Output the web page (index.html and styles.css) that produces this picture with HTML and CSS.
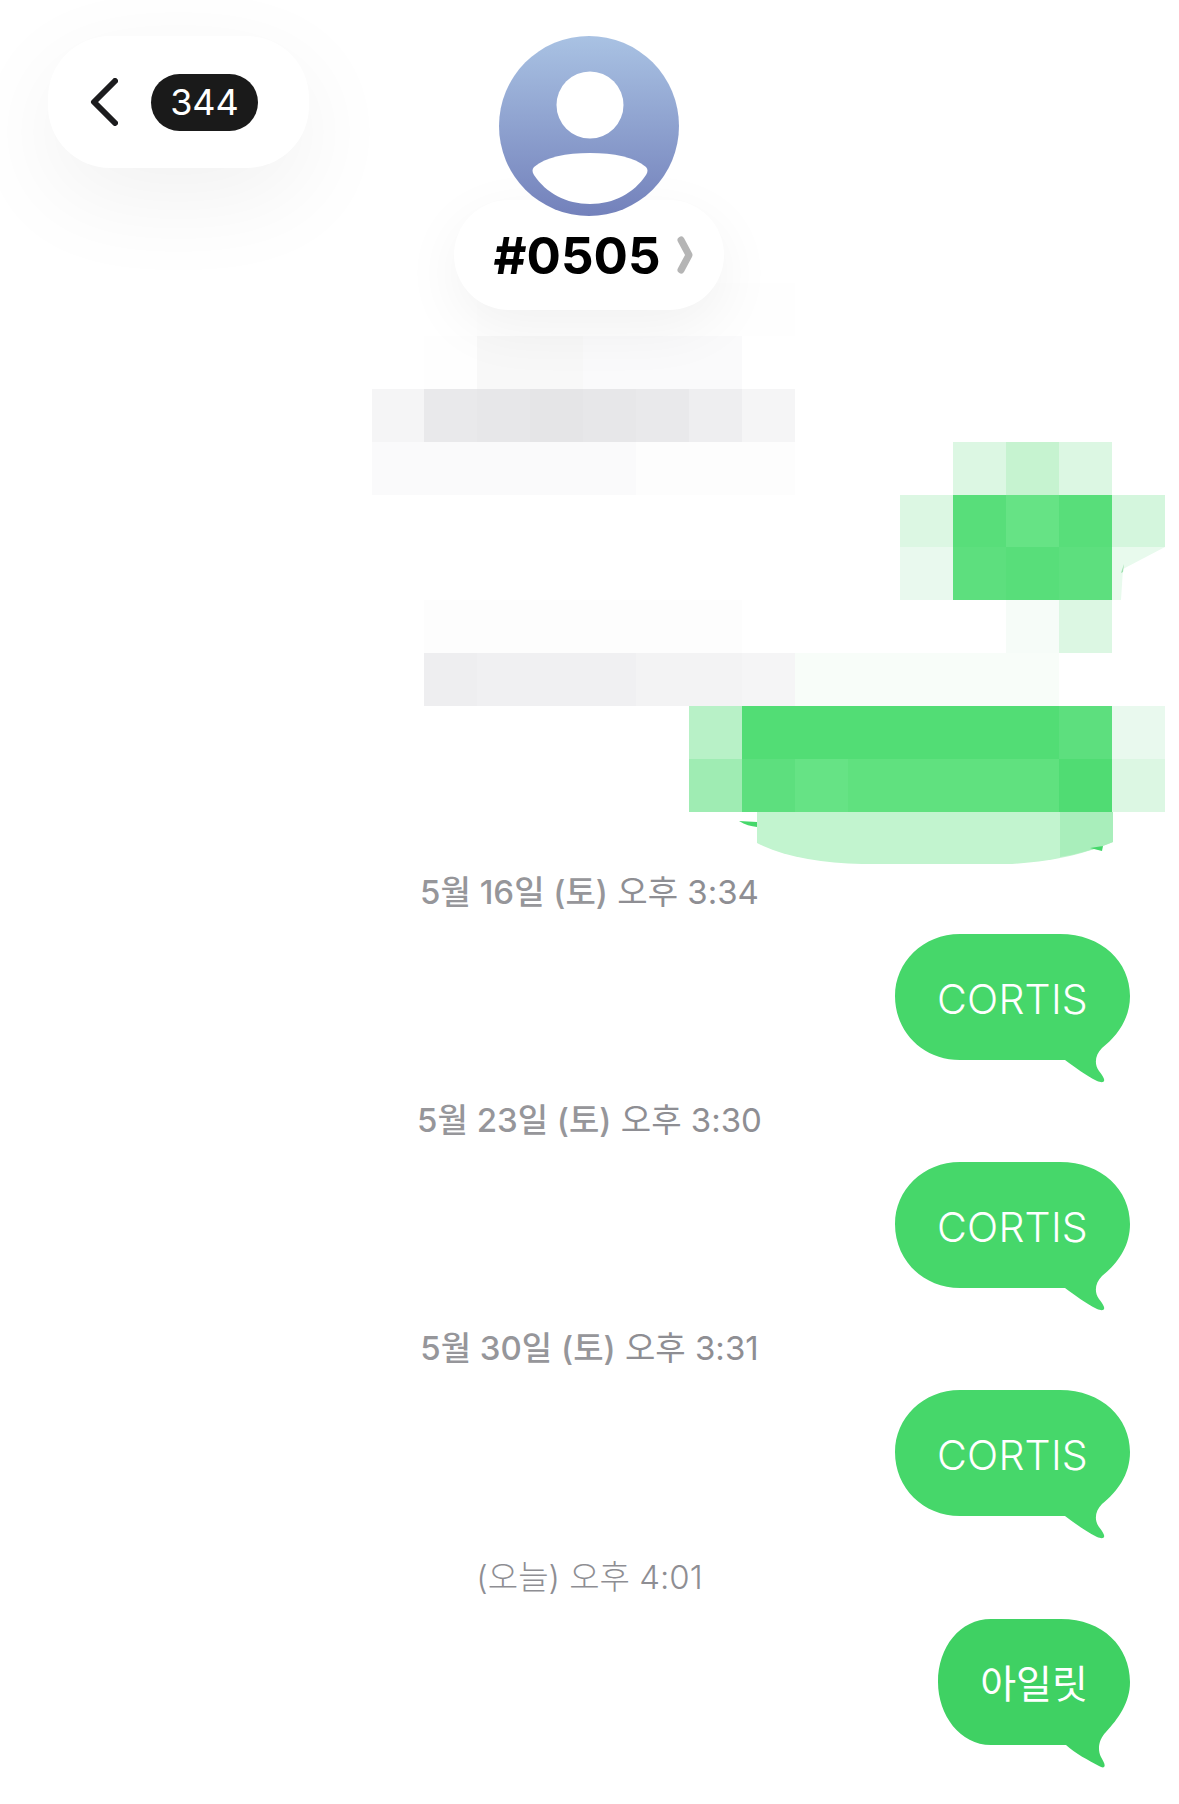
FILE: index.html
```html
<!DOCTYPE html>
<html>
    <head>
        <title>#0505</title>
        <link rel="stylesheet" href="styles.css">
    </head>
    <body>
        <div class="head">
            <div class="back_box">
                <svg class="back_icon" width="28" height="48" viewBox="0 0 28 48"><path d="M25 3 L4 24 L25 45" /></svg>
                <span class="back_num">344</span>
            </div>
            <div class="who">
                <div class="avatar">
                    <svg width="180" height="180" viewBox="0 0 180 180"><circle cx="91" cy="69" r="33.5" fill="#fff"/><path d="M35 131 C47 121 67 117 91 117 C115 117 135 121 147 131 C149 133 149 136 147 139 C135 157 115 168 91 168 C67 168 47 157 35 139 C33 136 33 133 35 131 Z" fill="#fff"/></svg>
                </div>
                <div class="who_name">#0505<svg class="who_arrow" width="16" height="38" viewBox="0 0 16 38"><path d="M4 4 L12 19 L4 34" /></svg></div>
            </div>
        </div>

        <!-- 打码的部分 -->
        <div class="mosaic">
            <i></i><i></i><i class="k0"></i><i class="k0"></i><i class="k0"></i><i class="k0"></i><i class="k0"></i><i class="k0"></i><i></i><i></i><i></i><i></i><i></i><i></i><i></i>
            <i></i><i class="k0"></i><i class="k4"></i><i class="k4"></i><i class="k3"></i><i class="k3"></i><i class="k3"></i><i></i><i></i><i></i><i></i><i></i><i></i><i></i><i></i>
            <i class="k5"></i><i class="k9"></i><i class="k10"></i><i class="k11"></i><i class="k10"></i><i class="k9"></i><i class="k8"></i><i class="k5"></i><i></i><i></i><i></i><i></i><i></i><i></i><i></i>
            <i class="k3"></i><i class="k3"></i><i class="k3"></i><i class="k3"></i><i class="k3"></i><i class="k2"></i><i class="k2"></i><i class="k2"></i><i></i><i></i><i></i><i class="g3"></i><i class="g4"></i><i class="g3"></i><i></i>
            <i></i><i></i><i></i><i></i><i></i><i></i><i></i><i></i><i></i><i></i><i class="g3"></i><i class="g8"></i><i class="g7"></i><i class="g8"></i><i class="g2b"></i>
            <i></i><i></i><i></i><i></i><i></i><i></i><i></i><i></i><i></i><i></i><i class="g2"></i><i class="g7b"></i><i class="g8"></i><i class="g7b"></i><svg class="torn" width="53" height="53" viewBox="0 0 53 53"><path d="M0 0 H53 L11 22 L9 53 H0 Z" fill="#e8faed"/><path d="M9 26 L12 17 L11 25 Z" fill="#9fe0b0"/></svg>
            <i></i><i class="k2"></i><i class="k2"></i><i class="k2"></i><i class="k2"></i><i class="k2"></i><i class="k2"></i><i></i><i></i><i></i><i></i><i></i><i class="g1"></i><i class="g3"></i><i></i>
            <i></i><i class="k8"></i><i class="k7"></i><i class="k7"></i><i class="k7"></i><i class="k6"></i><i class="k6"></i><i class="k5"></i><i class="g0"></i><i class="g0"></i><i class="g0"></i><i class="g0"></i><i class="g0"></i><i></i><i></i>
            <i></i><i></i><i></i><i></i><i></i><i></i><i class="g5"></i><i class="g9"></i><i class="g9"></i><i class="g9"></i><i class="g9"></i><i class="g9"></i><i class="g9"></i><i class="g7b"></i><i class="g2"></i>
            <i></i><i></i><i></i><i></i><i></i><i></i><i class="g6"></i><i class="g7b"></i><i class="g7"></i><i class="g10"></i><i class="g10"></i><i class="g10"></i><i class="g10"></i><i class="g11"></i><i class="g3"></i>
            <svg class="mosaic_end" width="371" height="53" viewBox="0 0 371 53"><path d="M15 0 H371 V30 C345 41 315 49 270 52 H120 C80 51 42 45 15 31 Z" fill="#c2f4cf"/><path d="M318 0 H371 V30 C354 37 336 42 318 45 Z" fill="#a9eebb"/><path d="M-3 9 C3 13 9 14 15 15 V10 Z" fill="#45d86a"/><path d="M348 36 L361 34 L360 39 Z" fill="#45d86a"/></svg>
        </div>

        <div class="chat">
            <div class="msg_time msg_time_first"><b>5월 16일 (토)</b> 오후 3:34</div>
            <div class="bubble">
                <svg class="bubble_bg" width="235" height="149" viewBox="0 0 235 149"><path d="M65 0 H165 C207 0 235 28 235 62 C235 85 222 102 207 114 C200 121 199 130 204 137 C207 141 210 145 209 147 C208 149 205 148 202 147 C190 141 181 134 170 126 H65 C28 126 0 98 0 62 C0 28 28 0 65 0 Z" /></svg>
                <span>CORTIS</span>
            </div>
            <div class="msg_time"><b>5월 23일 (토)</b> 오후 3:30</div>
            <div class="bubble">
                <svg class="bubble_bg" width="235" height="149" viewBox="0 0 235 149"><path d="M65 0 H165 C207 0 235 28 235 62 C235 85 222 102 207 114 C200 121 199 130 204 137 C207 141 210 145 209 147 C208 149 205 148 202 147 C190 141 181 134 170 126 H65 C28 126 0 98 0 62 C0 28 28 0 65 0 Z" /></svg>
                <span>CORTIS</span>
            </div>
            <div class="msg_time"><b>5월 30일 (토)</b> 오후 3:31</div>
            <div class="bubble">
                <svg class="bubble_bg" width="235" height="149" viewBox="0 0 235 149"><path d="M65 0 H165 C207 0 235 28 235 62 C235 85 222 102 207 114 C200 121 199 130 204 137 C207 141 210 145 209 147 C208 149 205 148 202 147 C190 141 181 134 170 126 H65 C28 126 0 98 0 62 C0 28 28 0 65 0 Z" /></svg>
                <span>CORTIS</span>
            </div>
            <div class="msg_time msg_time_light">(오늘) 오후 4:01</div>
            <div class="bubble bubble_last">
                <svg class="bubble_bg" width="192" height="149" viewBox="0 0 192 149"><path d="M53 0 H123 C165 0 192 28 192 63 C192 84 180 100 168 113 C161 120 159 130 163 138 C165 142 168 146 166 148 C165 149 163 148 161 147 C150 141 138 135 128 126 H53 C22 126 0 96 0 63 C0 28 22 0 53 0 Z" /></svg>
                <span>아일릿</span>
            </div>
        </div>
    </body>
</html>
```

FILE: styles.css
```css
html, body{
    margin: 0;
    padding: 0;
    background: #fff;
}
body{
    width: 1179px;
    height: 1804px;
    overflow: hidden;
    font-family: Inter, "Noto Sans CJK KR", sans-serif;
}

/* 顶部 */
.head{
    position: relative;
    z-index: 2;
    height: 310px;
    padding-top: 36px;
    box-sizing: border-box;
}
.back_box{
    width: 261px;
    height: 132px;
    margin-left: 48px;
    padding-left: 42px;
    box-sizing: border-box;
    display: flex;
    align-items: center;
    gap: 33px;
    background: #fff;
    border-radius: 62px;
    box-shadow: 0 30px 100px rgba(0, 0, 0, .06);
}
.back_icon{
    fill: none;
    stroke: #1c1c1e;
    stroke-width: 6;
    stroke-linecap: round;
    stroke-linejoin: round;
}
.back_num{
    width: 107px;
    height: 57px;
    line-height: 57px;
    text-align: center;
    font-size: 36px;
    color: #fff;
    background: #1a1a1a;
    border-radius: 29px;
}
.who{
    position: absolute;
    left: 454px;
    top: 36px;
    width: 270px;
}
.avatar{
    position: relative;
    z-index: 1;
    width: 180px;
    height: 180px;
    margin: 0 auto -16px;
    border-radius: 50%;
    background: linear-gradient(#a9c2e3, #7381bb);
}
.avatar svg{
    display: block;
}
.who_name{
    height: 110px;
    padding-left: 8px;
    display: flex;
    align-items: center;
    justify-content: center;
    gap: 16px;
    font-size: 51px;
    font-weight: 700;
    color: #000;
    background: #fff;
    border-radius: 55px;
    box-shadow: 0 18px 60px rgba(0, 0, 0, .055);
}
.who_arrow{
    fill: none;
    stroke: #b5b5b5;
    stroke-width: 7;
    stroke-linecap: round;
    stroke-linejoin: round;
}

/* 打码 */
.mosaic{
    position: relative;
    margin: -27px 0 0 371.5px;
    display: grid;
    grid-template-columns: repeat(15, 52.9px);
    grid-auto-rows: 52.9px;
    width: 794px;
}
.mosaic_end{
    grid-column: 8 / 15;
    overflow: visible;
}
.torn{
    display: block;
    overflow: visible;
}
.k0{ background: #fefefe; }
.k2{ background: #fdfdfd; }
.k3{ background: #fafafb; }
.k4{ background: #f8f8f8; }
.k5{ background: #f5f5f6; }
.k6{ background: #f3f3f4; }
.k7{ background: #f0f0f2; }
.k8{ background: #eeeef0; }
.k9{ background: #e9e9eb; }
.k10{ background: #e7e7e9; }
.k11{ background: #e5e5e7; }
.g0{ background: #f8fdf9; }
.g1{ background: #f6fcf8; }
.g2{ background: #e9f9ee; }
.g2b{ background: #d4f6dd; }
.g3{ background: #dcf7e3; }
.g4{ background: #c6f3d0; }
.g5{ background: #b8f1c7; }
.g6{ background: #9fecb3; }
.g7{ background: #66e385; }
.g7b{ background: #5ddf7e; }
.g8{ background: #58de7a; }
.g9{ background: #52dd75; }
.g10{ background: #60e17f; }
.g11{ background: #50dc73; }

/* 消息 */
.chat{
    padding-top: 6px;
    display: flex;
    flex-direction: column;
}
.msg_time{
    height: 42px;
    line-height: 42px;
    margin-top: 39px;
    text-align: center;
    font-size: 33px;
    color: #8e8e93;
}
.msg_time b{
    font-weight: 500;
    color: #96969a;
}
.msg_time_first{
    margin-top: 0;
}
.msg_time_light{
    margin-top: 40px;
    font-weight: 300;
}
.bubble{
    position: relative;
    align-self: flex-end;
    margin: 21px 49px 0 0;
    width: 235px;
    height: 126px;
    line-height: 130px;
    text-align: center;
    font-size: 41px;
    font-weight: 350;
    letter-spacing: .2px;
    color: #fff;
}
.bubble span{
    position: relative;
}
.bubble_bg{
    position: absolute;
    left: 0;
    top: 0;
    fill: #46d76a;
}
.bubble_last{
    width: 192px;
    font-size: 39px;
    font-weight: 400;
    letter-spacing: 0;
}
.bubble_last .bubble_bg{
    fill: #3fd163;
}
```
